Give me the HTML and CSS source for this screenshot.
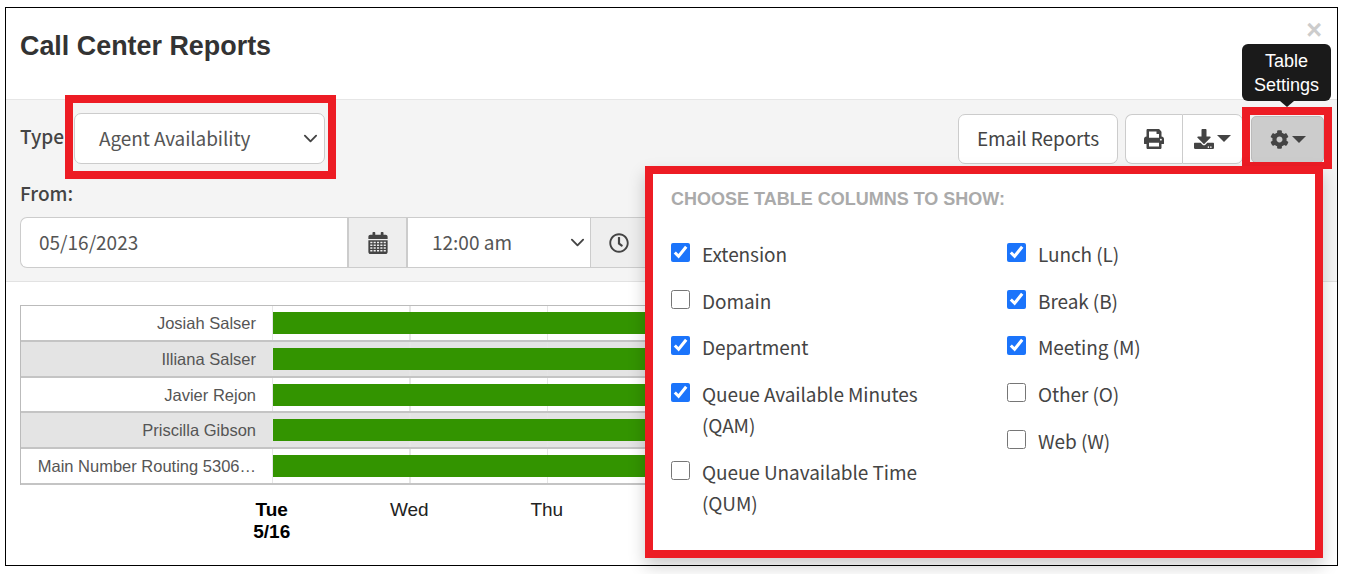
FILE: index.html
```html
<!DOCTYPE html>
<html lang="en">
<head>
<meta charset="utf-8">
<title>Call Center Reports</title>
<link rel="stylesheet" href="styles.css">
</head>
<body>
<div class="modal">
  <header class="head">
    <h1>Call Center Reports</h1>
    <span class="close">×</span>
  </header>
  <section class="toolbar">
    <div class="row-one">
      <label class="type-label">Type</label>
      <div class="select type-select"><span>Agent Availability</span>
        <svg class="chev" viewBox="0 0 16 16"><path d="M2 5l6 6 6-6" fill="none" stroke="#444" stroke-width="2" stroke-linecap="round" stroke-linejoin="round"/></svg>
      </div>
      <div class="actions">
        <button class="btn email">Email Reports</button>
        <div class="group">
          <button class="btn print"><svg class="ico" viewBox="0 0 512 512"><path d="M448 192V77.25c0-8.49-3.37-16.62-9.37-22.63L393.37 9.37c-6-6-14.14-9.37-22.63-9.37H96C78.33 0 64 14.33 64 32v160c-35.35 0-64 28.65-64 64v112c0 8.84 7.16 16 16 16h48v96c0 17.67 14.33 32 32 32h320c17.67 0 32-14.33 32-32v-96h48c8.84 0 16-7.16 16-16V256c0-35.35-28.65-64-64-64zm-64 256H128v-96h256v96zm0-224H128V64h192v48c0 8.84 7.16 16 16 16h48v96zm48 72c-13.25 0-24-10.75-24-24 0-13.26 10.75-24 24-24s24 10.74 24 24c0 13.25-10.75 24-24 24z"/></svg></button>
          <button class="btn down"><svg class="ico" viewBox="0 0 512 512"><path d="M216 0h80c13.3 0 24 10.7 24 24v168h87.7c17.8 0 26.7 21.5 14.1 34.1L269.7 378.3c-7.5 7.5-19.8 7.5-27.3 0L90.1 226.1c-12.6-12.6-3.7-34.1 14.1-34.1H192V24c0-13.3 10.7-24 24-24zm296 376v112c0 13.3-10.7 24-24 24H24c-13.3 0-24-10.7-24-24V376c0-13.3 10.7-24 24-24h146.7l49 49c20.1 20.1 52.5 20.1 72.6 0l49-49H488c13.3 0 24 10.7 24 24zm-124 88c0-11-9-20-20-20s-20 9-20 20 9 20 20 20 20-9 20-20zm64 0c0-11-9-20-20-20s-20 9-20 20 9 20 20 20 20-9 20-20z"/></svg><i class="caret"></i></button>
        </div>
        <button class="btn gear"><svg class="ico gear-ico" viewBox="0 0 512 512"><path d="M487.4 315.7l-42.6-24.6c4.3-23.2 4.3-47 0-70.2l42.6-24.6c4.9-2.8 7.1-8.6 5.5-14-11.1-35.6-30-67.8-54.7-94.6-3.8-4.1-10-5.1-14.8-2.3L380.8 110c-17.9-15.4-38.5-27.3-60.8-35.1V25.8c0-5.6-3.9-10.5-9.4-11.7-36.7-8.2-74.3-7.8-109.2 0-5.5 1.2-9.4 6.1-9.4 11.7V75c-22.2 7.9-42.8 19.8-60.8 35.1L88.7 85.5c-4.9-2.8-11-1.9-14.8 2.3-24.7 26.7-43.6 58.9-54.7 94.6-1.7 5.4.6 11.2 5.5 14L67.3 221c-4.3 23.2-4.3 47 0 70.2l-42.6 24.6c-4.9 2.8-7.1 8.6-5.5 14 11.1 35.6 30 67.8 54.7 94.6 3.8 4.1 10 5.1 14.8 2.3l42.6-24.6c17.9 15.4 38.5 27.3 60.8 35.1v49.2c0 5.6 3.9 10.5 9.4 11.7 36.7 8.2 74.3 7.8 109.2 0 5.5-1.2 9.4-6.1 9.4-11.7v-49.2c22.2-7.9 42.8-19.8 60.8-35.1l42.6 24.6c4.9 2.8 11 1.9 14.8-2.3 24.7-26.7 43.6-58.9 54.7-94.6 1.5-5.5-.7-11.3-5.6-14.1zM256 336c-44.1 0-80-35.9-80-80s35.9-80 80-80 80 35.9 80 80-35.9 80-80 80z"/></svg><i class="caret"></i></button>
      </div>
    </div>
    <label class="from-label">From:</label>
    <div class="row-two">
      <div class="date">05/16/2023</div>
      <div class="addon cal"><svg class="ico cal-ico" viewBox="0 0 448 512"><path d="M400 64h-48V16c0-8.800-7.200-16-16-16h-32c-8.800 0-16 7.200-16 16v48H160V16c0-8.800-7.200-16-16-16h-32c-8.800 0-16 7.200-16 16v48H48C21.500 64 0 85.500 0 112v48h448v-48c0-26.500-21.500-48-48-48z"/><path fill-rule="evenodd" d="M0 192h448v272c0 26.500-21.500 48-48 48H48c-26.500 0-48-21.500-48-48zM44 226v36h50v-36zm78 0v36h50v-36zm78 0v36h50v-36zm78 0v36h50v-36zm78 0v36h50v-36zM44 290v36h50v-36zm78 0v36h50v-36zm78 0v36h50v-36zm78 0v36h50v-36zm78 0v36h50v-36zM44 354v36h50v-36zm78 0v36h50v-36zm78 0v36h50v-36zm78 0v36h50v-36zm78 0v36h50v-36zM44 418v36h50v-36zm78 0v36h50v-36zm78 0v36h50v-36zm78 0v36h50v-36zm78 0v36h50v-36z"/></svg></div>
      <div class="select time"><span>12:00 am</span>
        <svg class="chev" viewBox="0 0 16 16"><path d="M2 5l6 6 6-6" fill="none" stroke="#444" stroke-width="2" stroke-linecap="round" stroke-linejoin="round"/></svg>
      </div>
      <div class="addon clock"><svg class="ico" viewBox="0 0 512 512"><path d="M256 8C119 8 8 119 8 256s111 248 248 248 248-111 248-248S393 8 256 8zm0 448c-110.500 0-200-89.500-200-200S145.500 56 256 56s200 89.500 200 200-89.500 200-200 200zm61.800-104.400l-84.900-61.700c-3.100-2.300-4.900-5.900-4.900-9.700V116c0-6.600 5.400-12 12-12h32c6.600 0 12 5.400 12 12v141.700l66.800 48.600c5.400 3.900 6.500 11.400 2.600 16.800L334.600 349c-3.900 5.300-11.400 6.500-16.800 2.600z"/></svg></div>
    </div>
  </section>
  <section class="chart">
    <div class="rows">
      <div class="row"><div class="name">Josiah Salser</div><div class="track"><div class="bar"></div></div></div>
      <div class="row"><div class="name">Illiana Salser</div><div class="track"><div class="bar"></div></div></div>
      <div class="row"><div class="name">Javier Rejon</div><div class="track"><div class="bar"></div></div></div>
      <div class="row"><div class="name">Priscilla Gibson</div><div class="track"><div class="bar"></div></div></div>
      <div class="row"><div class="name">Main Number Routing 5306…</div><div class="track"><div class="bar"></div></div></div>
    </div>
    <div class="axis">
      <div class="tick today">Tue<br>5/16</div>
      <div class="tick">Wed</div>
      <div class="tick">Thu</div>
    </div>
  </section>

  <div class="frame frame-type"></div>
  <div class="frame frame-gear"></div>
  <div class="tip">Table Settings</div>

  <div class="menu">
    <div class="menu-title">CHOOSE TABLE COLUMNS TO SHOW:</div>
    <div class="cols">
      <div class="col">
        <label class="opt"><input type="checkbox" checked><span>Extension</span></label>
        <label class="opt"><input type="checkbox"><span>Domain</span></label>
        <label class="opt"><input type="checkbox" checked><span>Department</span></label>
        <label class="opt"><input type="checkbox" checked><span>Queue Available Minutes (QAM)</span></label>
        <label class="opt"><input type="checkbox"><span>Queue Unavailable Time (QUM)</span></label>
      </div>
      <div class="col">
        <label class="opt"><input type="checkbox" checked><span>Lunch (L)</span></label>
        <label class="opt"><input type="checkbox" checked><span>Break (B)</span></label>
        <label class="opt"><input type="checkbox" checked><span>Meeting (M)</span></label>
        <label class="opt"><input type="checkbox"><span>Other (O)</span></label>
        <label class="opt"><input type="checkbox"><span>Web (W)</span></label>
      </div>
    </div>
  </div>
</div>
</body>
</html>
```

FILE: styles.css
```css
* { box-sizing: border-box; }
html, body { margin: 0; padding: 0; background: #fff; overflow: hidden; }
body {
  height: 574px;
  padding: 7px 0 0 5px;
  font-family: "Noto Sans CJK SC", "Noto Sans", sans-serif;
  color: #444;
}
.modal {
  position: relative;
  width: 1333px;
  height: 559px;
  border: 1px solid #000;
  background: #fff;
}
.head { height: 91px; padding: 19px 14px 0; }
.head h1 {
  margin: 0;
  font: bold 26.9px/38px "Liberation Sans", Arial, sans-serif;
  color: #333;
}
.close {
  position: absolute;
  right: 15px;
  top: 8px;
  font: bold 27px/28px "Liberation Sans", Arial, sans-serif;
  color: #ccc;
}
.toolbar {
  height: 183px;
  padding: 13px 14px 0 14px;
  background: #f4f4f4;
  border-top: 1px solid #e6e6e6;
  border-bottom: 1px solid #e2e2e2;
}
.row-one { display: flex; align-items: center; height: 51px; }
.type-label, .from-label {
  font-size: 19px;
  line-height: 24px;
  font-weight: 500;
  color: #444;
}
.type-label { width: 54px; margin-top: -5px; }
.select {
  display: flex;
  align-items: center;
  justify-content: space-between;
  background: #fff;
  font-size: 19px;
  letter-spacing: -.1px;
  color: #555;
}
.select span { line-height: 24px; margin-top: -2px; }
.type-select {
  width: 251px;
  height: 51px;
  padding: 0 6px 0 24px;
  border: 1px solid #ccc;
  border-radius: 7px;
}
.chev { width: 15px; height: 15px; }
.actions { display: flex; align-items: flex-start; margin-left: auto; }
.btn {
  display: flex;
  align-items: center;
  justify-content: center;
  height: 50px;
  padding: 0 0 2px;
  background: #fff;
  border: 1px solid #ccc;
  border-radius: 7px;
  font-family: inherit;
  font-size: 19px;
  letter-spacing: -.1px;
  color: #444;
}
.email { width: 160px; }
.group { display: flex; margin-left: 7px; }
.print { width: 57px; border-radius: 7px 0 0 7px; border-right: 0; padding: 0; }
.down { width: 61px; border-radius: 0 7px 7px 0; padding: 0; }
.gear {
  width: 73px;
  height: 47px;
  margin: 2px -1px 0 8px;
  padding: 0;
  background: #ccc;
  border-color: #bbb;
  border-radius: 5px;
}
.ico { width: 20px; height: 20px; fill: #444; display: block; }
.gear-ico { width: 19px; height: 19px; }
.caret {
  width: 0;
  height: 0;
  margin-left: 3px;
  border-left: 7px solid transparent;
  border-right: 7px solid transparent;
  border-top: 7px solid #444;
}
.from-label { display: block; margin-top: 17px; }
.row-two { display: flex; height: 51px; margin-top: 12px; }
.date {
  width: 327px;
  padding: 0 18px;
  background: #fff;
  border: 1px solid #ccc;
  border-right: 0;
  border-radius: 7px 0 0 7px;
  font-size: 19px;
  line-height: 47px;
  color: #555;
}
.addon {
  display: flex;
  align-items: center;
  justify-content: center;
  background: #eee;
  border: 2px solid #ccc;
  border-width: 1px 2px 1px 2px;
}
.cal { width: 61px; }
.cal-ico { width: 20px; height: 22px; }
.time {
  width: 182px;
  padding: 0 5px 0 24px;
  border: 1px solid #ccc;
  border-width: 1px 0;
  letter-spacing: 0;
}
.clock { width: 58px; border-width: 1px; }
.chart { padding: 23px 14px 0; }
.rows { border-top: 1px solid #bbb; border-left: 1px solid #bbb; }
.row {
  display: flex;
  height: 35.8px;
  border-bottom: 2px solid #c4c4c4;
}
.row:nth-child(even) { background: #e4e4e4; }
.name {
  width: 251px;
  padding-right: 16px;
  text-align: right;
  font: 16.5px/34px "Liberation Sans", Arial, sans-serif;
  color: #555;
}
.track {
  flex: 1;
  padding-top: 6px;
  background-image: repeating-linear-gradient(90deg, #e6e6e6 0 1px, transparent 1px 137.5px);
}
.bar { height: 22px; margin-left: 1px; background: #339400; }
.axis {
  display: flex;
  margin: 14px 0 0 183px;
  font: 19px/22px "Liberation Sans", Arial, sans-serif;
  color: #222;
}
.tick { width: 137.5px; text-align: center; }
.today { font-weight: bold; color: #000; }

.frame { position: absolute; border: 8px solid #ed1c24; }
.frame-type { left: 59px; top: 87px; width: 271px; height: 84px; }
.frame-gear { left: 1236px; top: 99px; width: 90px; height: 62px; border-bottom-width: 7px; }
.tip {
  position: absolute;
  left: 1236px;
  top: 36px;
  width: 89px;
  height: 57px;
  padding: 5px 8px;
  background: #1a1a1a;
  border-radius: 6px;
  text-align: center;
  font: 18px/24px "Liberation Sans", Arial, sans-serif;
  color: #fff;
}
.tip::after {
  content: "";
  position: absolute;
  left: 38px;
  top: 57px;
  border-left: 7px solid transparent;
  border-right: 7px solid transparent;
  border-top: 6px solid #1a1a1a;
}
.menu {
  position: absolute;
  left: 639px;
  top: 158px;
  width: 678px;
  height: 392px;
  padding: 13px 18px 0 18px;
  background: #fff;
  border: 8px solid #ed1c24;
  box-shadow: 0 8px 16px rgba(0, 0, 0, .2);
}
.menu-title {
  font: bold 18px/24px "Liberation Sans", Arial, sans-serif;
  color: #aaa;
}
.cols { display: flex; margin-top: 27px; }
.col { flex: none; width: 336px; }
.opt {
  display: flex;
  align-items: flex-start;
  margin-bottom: 15.7px;
  font-size: 19px;
  line-height: 31px;
  letter-spacing: -.08px;
  color: #444;
}
.opt input {
  flex: none;
  width: 19px;
  height: 19px;
  margin: 5px 12px 0 0;
  accent-color: #1b74fb;
}
.opt span { width: 250px; }
```
